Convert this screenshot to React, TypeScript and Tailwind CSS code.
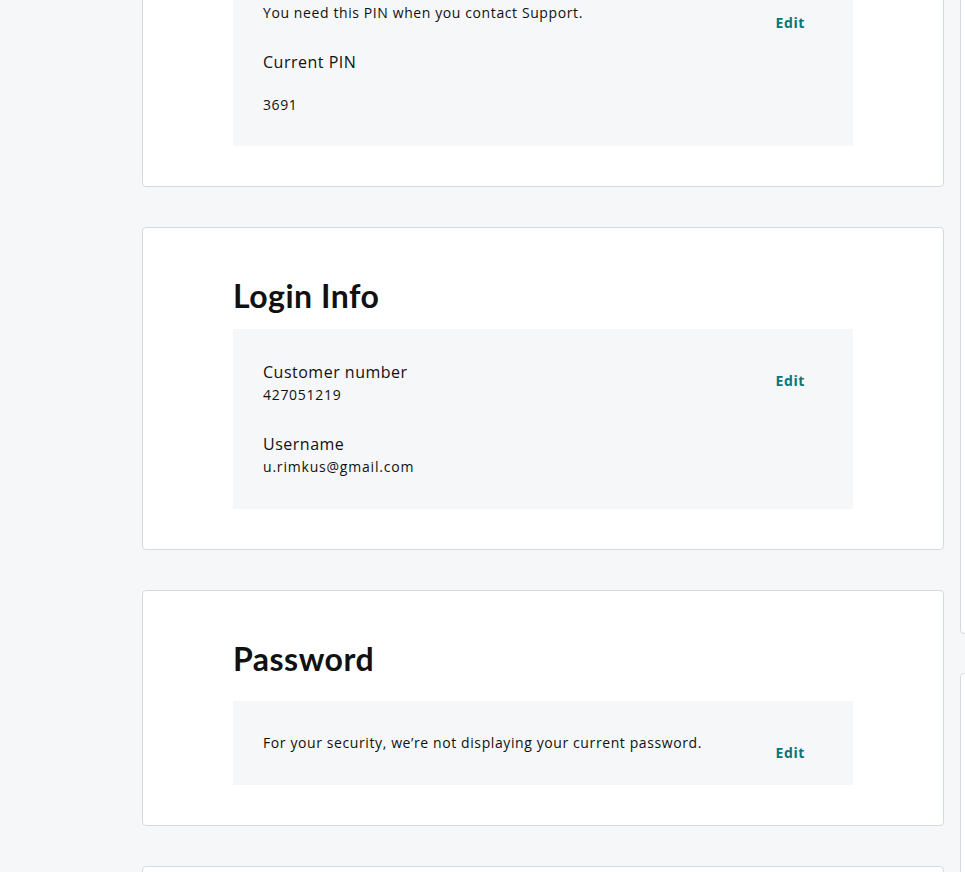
import React from "react";

function EditLink() {
  return (
    <a className="mt-[11px] -mb-[12px] shrink-0 text-[14px] leading-[20px] font-bold tracking-[0.6px] text-[#09757a] cursor-pointer">
      Edit
    </a>
  );
}

const headingFont = { fontFamily: 'Lato, "Open Sans", sans-serif' };

export default function App() {
  return (
    <div
      className="w-[965px] h-[872px] overflow-hidden bg-[#f5f7f8] text-[#111111]"
      style={{ fontFamily: '"Open Sans", "Noto Sans", sans-serif' }}
    >
      <div className="flex gap-[16px] pl-[142px]">
        {/* Left column */}
        <div className="w-[802px] shrink-0 mt-[-131px] flex flex-col gap-[40px]">
          {/* Support PIN card */}
          <section className="bg-white border border-[#d4dbe0] rounded-[4px] px-[90px] pt-[46px] pb-[40px]">
            <h2 className="text-[32px] leading-[44px] font-bold tracking-[0.5px] mb-[11px]" style={headingFont}>
              Support PIN
            </h2>
            <div className="bg-[#f5f7f8] flex justify-between pl-[30px] pr-[48px] pt-[31px] pb-[30px]">
              <div>
                <p className="text-[14px] leading-[22px] tracking-[0.6px]">You need this PIN when you contact Support.</p>
                <p className="text-[16px] leading-[24px] tracking-[0.5px] mt-[26px]">Current PIN</p>
                <p className="text-[14px] leading-[22px] tracking-[0.6px] mt-[20px]">3691</p>
              </div>
              <EditLink />
            </div>
          </section>

          {/* Login Info card */}
          <section className="bg-white border border-[#d4dbe0] rounded-[4px] px-[90px] pt-[46px] pb-[40px]">
            <h2 className="text-[32px] leading-[44px] font-bold tracking-[0.5px] mb-[11px]" style={headingFont}>
              Login Info
            </h2>
            <div className="bg-[#f5f7f8] flex justify-between pl-[30px] pr-[48px] pt-[31px] pb-[31px]">
              <div>
                <p className="text-[16px] leading-[24px] tracking-[0.5px]">Customer number</p>
                <p className="text-[14px] leading-[22px] tracking-[0.7px]">427051219</p>
                <p className="text-[16px] leading-[24px] tracking-[0.5px] mt-[26px]">Username</p>
                <p className="text-[14px] leading-[22px] tracking-[0.8px]">u.rimkus@gmail.com</p>
              </div>
              <EditLink />
            </div>
          </section>

          {/* Password card */}
          <section className="bg-white border border-[#d4dbe0] rounded-[4px] px-[90px] pt-[46px] pb-[40px]">
            <h2 className="text-[32px] leading-[44px] font-bold tracking-[0.5px] mb-[20px]" style={headingFont}>
              Password
            </h2>
            <div className="bg-[#f5f7f8] flex justify-between pl-[30px] pr-[48px] pt-[31px] pb-[31px]">
              <p className="text-[14px] leading-[22px] tracking-[0.6px]">
                For your security, we&#8217;re not displaying your current password.
              </p>
              <EditLink />
            </div>
          </section>

          {/* Next card (partially visible) */}
          <section className="bg-white border border-[#d4dbe0] rounded-[4px] h-[300px]" />
        </div>

        {/* Right column */}
        <div className="w-[300px] shrink-0 mt-[-100px] flex flex-col gap-[39px]">
          <section className="bg-white border border-[#d4dbe0] rounded-[4px] h-[734px]" />
          <section className="bg-white border border-[#d4dbe0] rounded-[4px] h-[400px]" />
        </div>
      </div>
    </div>
  );
}
